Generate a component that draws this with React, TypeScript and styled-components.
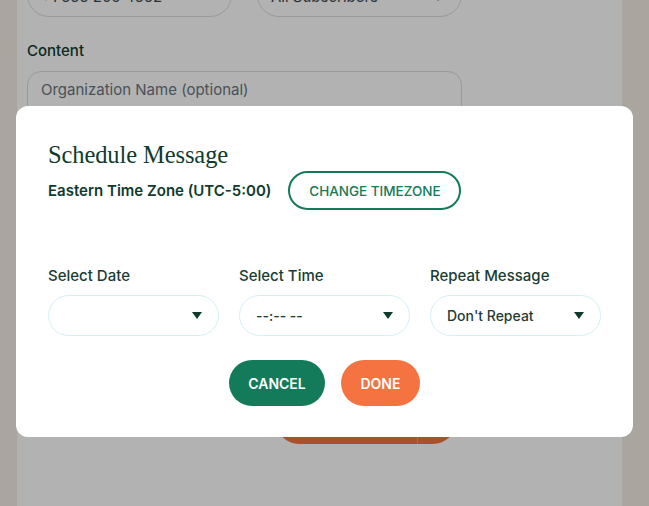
import React from "react";
import styled, { createGlobalStyle } from "styled-components";

const GlobalStyle = createGlobalStyle`
  html, body {
    margin: 0;
    padding: 0;
    height: 100%;
    overflow: hidden;
    background: #f4ede3;
  }
  * { box-sizing: border-box; }
  body {
    font-family: Inter, "Liberation Sans", Arial, sans-serif;
  }
`;

const green = "#137a5a";
const ink = "#0f3b2f";
const orange = "#f47340";

/* ---------- page behind the dialog ---------- */

const Page = styled.div`
  width: 605px;
  height: 506px;
  margin-left: 17px;
  background: #ffffff;
  overflow: hidden;
`;

const Form = styled.div`
  display: flex;
  flex-direction: column;
  padding: 0 10px;
  margin-top: -28px;
`;

const FieldRow = styled.div`
  display: flex;
  gap: 25px;
`;

const Field = styled.div<{ $width: number }>`
  width: ${(p) => p.$width}px;
  height: 45px;
  border: 1px solid #dcdcdc;
  border-radius: 22px;
  display: flex;
  align-items: flex-end;
  justify-content: space-between;
  padding: 0 18px 10px 13px;
  font-size: 15px;
  line-height: 18px;
  color: #3f4a52;
`;

const SectionLabel = styled.div`
  margin-top: 24px;
  font-size: 15px;
  font-weight: 500;
  color: ${ink};
  line-height: 20px;
`;

const TextInput = styled(Field)`
  margin-top: 10px;
  height: 48px;
  align-items: flex-start;
  padding: 9px 18px 0 13px;
  border-radius: 14px;
  color: #6a7580;
`;

const SplitButton = styled.div`
  margin: 279px 0 0 249px;
  display: flex;
  width: 180px;
  height: 46px;
  border-radius: 23px;
  overflow: hidden;
  background: ${orange};
`;

const SplitMain = styled.div`
  flex: 1;
  border-right: 1px solid #f69a74;
`;

const SplitSide = styled.div`
  width: 38px;
`;

/* ---------- dialog ---------- */

const Backdrop = styled.div`
  position: fixed;
  inset: 0;
  background: rgba(0, 0, 0, 0.3);
`;

const Dialog = styled.div`
  position: fixed;
  left: 16px;
  top: 106px;
  width: 617px;
  background: #ffffff;
  border-radius: 12px;
  padding: 34px 32px 31px;
  display: flex;
  flex-direction: column;
`;

const Title = styled.h2`
  margin: 0;
  font-family: "Liberation Serif", "Times New Roman", serif;
  font-weight: 400;
  font-size: 24.5px;
  line-height: 30px;
  color: ${ink};
  letter-spacing: -0.1px;
`;

const ZoneRow = styled.div`
  margin-top: 1px;
  display: flex;
  align-items: center;
  gap: 17px;
`;

const ZoneText = styled.span`
  font-size: 15px;
  font-weight: 600;
  color: ${ink};
`;

const OutlineButton = styled.button`
  height: 39px;
  width: 173px;
  border: 2px solid ${green};
  border-radius: 20px;
  background: #ffffff;
  color: ${green};
  font-family: inherit;
  font-size: 13.5px;
  font-weight: 500;
  text-transform: uppercase;
  padding: 0;
`;

const Pickers = styled.div`
  margin-top: 56px;
  display: grid;
  grid-template-columns: repeat(3, 171px);
  column-gap: 20px;
`;

const Picker = styled.div`
  display: flex;
  flex-direction: column;
  gap: 9px;
`;

const PickerLabel = styled.label`
  font-size: 15px;
  font-weight: 500;
  line-height: 20px;
  color: #1a3d33;
`;

const SelectBox = styled.div`
  height: 41px;
  border: 1.5px solid #d3eff6;
  border-radius: 21px;
  display: flex;
  align-items: center;
  justify-content: space-between;
  padding: 0 16px 0 16px;
  font-size: 14px;
  font-weight: 500;
  color: #1f3d35;
`;

const Caret = styled.span`
  width: 0;
  height: 0;
  border-left: 5.5px solid transparent;
  border-right: 5.5px solid transparent;
  border-top: 7px solid ${ink};
`;

/* the caret of the half-scrolled field sits level with its text */
const FieldCaret = styled(Caret)`
  margin-bottom: 5px;
  border-top-color: #3f4a52;
`;

const Actions = styled.div`
  margin-top: 24px;
  display: flex;
  justify-content: center;
  gap: 16px;
`;

const PillButton = styled.button<{ $tone: "green" | "orange"; $width: number }>`
  height: 46px;
  width: ${(p) => p.$width}px;
  border: none;
  border-radius: 23px;
  background: ${(p) => (p.$tone === "green" ? green : orange)};
  color: #ffffff;
  font-family: inherit;
  font-size: 14px;
  font-weight: 600;
  padding: 0;
`;

const Select = ({ value }: { value: string }) => (
  <SelectBox>
    <span>{value}</span>
    <Caret />
  </SelectBox>
);

export default function App() {
  return (
    <>
      <GlobalStyle />
      <Page>
        <Form>
          <FieldRow>
            <Field $width={205}>+1 555 209 4562</Field>
            <Field $width={205}>
              All Subscribers <FieldCaret />
            </Field>
          </FieldRow>
          <SectionLabel>Content</SectionLabel>
          <TextInput $width={435}>Organization Name (optional)</TextInput>
          <SplitButton>
            <SplitMain />
            <SplitSide />
          </SplitButton>
        </Form>
      </Page>
      <Backdrop />
      <Dialog>
        <Title>Schedule Message</Title>
        <ZoneRow>
          <ZoneText>Eastern Time Zone (UTC-5:00)</ZoneText>
          <OutlineButton>Change Timezone</OutlineButton>
        </ZoneRow>
        <Pickers>
          <Picker>
            <PickerLabel>Select Date</PickerLabel>
            <Select value="" />
          </Picker>
          <Picker>
            <PickerLabel>Select Time</PickerLabel>
            <Select value="--:-- --" />
          </Picker>
          <Picker>
            <PickerLabel>Repeat Message</PickerLabel>
            <Select value="Don't Repeat" />
          </Picker>
        </Pickers>
        <Actions>
          <PillButton $tone="green" $width={96}>CANCEL</PillButton>
          <PillButton $tone="orange" $width={79}>DONE</PillButton>
        </Actions>
      </Dialog>
    </>
  );
}
